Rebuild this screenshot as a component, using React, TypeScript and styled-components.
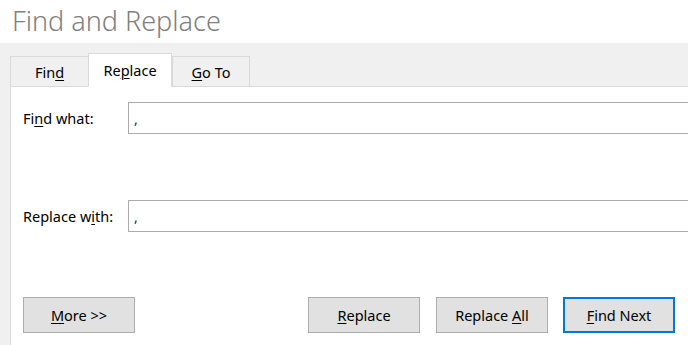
import React from "react";
import styled, { createGlobalStyle } from "styled-components";

const Global = createGlobalStyle`
  html, body { margin: 0; padding: 0; background: #f0f0f0; }
  body { font-family: "Noto Sans", "Open Sans", sans-serif; overflow: hidden; }
  #root { height: 345px; }
`;

const Window = styled.div`
  height: 345px;
  width: 688px;
  display: flex;
  flex-direction: column;
  overflow: hidden;
`;

const TitleBar = styled.div`
  height: 43px;
  background: #ffffff;
  padding-left: 12px;
  display: flex;
  align-items: center;
  box-sizing: border-box;
`;

const Title = styled.h1`
  margin: 0;
  font-family: "Noto Sans", "Open Sans", sans-serif;
  font-weight: 300;
  font-size: 27px;
  color: #808080;
  line-height: 1;
  transform: translateY(-1px);
`;

const Body = styled.div`
  flex: 1;
  display: flex;
  flex-direction: column;
  padding: 11px 0 0 10px;
  background: #f0f0f0;
  min-height: 0;
`;

const TabRow = styled.div`
  display: flex;
  align-items: flex-end;
  height: 33px;
  position: relative;
  z-index: 1;
  margin-bottom: -1px;
`;

const Tab = styled.div<{ $active?: boolean; $w: number }>`
  box-sizing: border-box;
  width: ${(p) => p.$w}px;
  height: ${(p) => (p.$active ? 34 : 31)}px;
  display: flex;
  align-items: center;
  justify-content: center;
  border: 1px solid #d9d9d9;
  border-bottom: ${(p) => (p.$active ? "1px solid #ffffff" : "1px solid #d9d9d9")};
  ${(p) => (p.$active ? "" : "border-right: none;")}
  background: ${(p) => (p.$active ? "#ffffff" : "#f0f0f0")};
  font-size: 14.5px;
  color: #000;
  padding-top: ${(p) => (p.$active ? 0 : 1)}px;
  &:last-child { border-right: 1px solid #d9d9d9; }
`;

const Panel = styled.div`
  flex: 1;
  background: #ffffff;
  border-top: 1px solid #d9d9d9;
  border-left: 1px solid #d9d9d9;
  display: flex;
  flex-direction: column;
  padding: 15px 0 0 12px;
  box-sizing: border-box;
`;

const FieldRow = styled.div<{ $mt?: number }>`
  display: flex;
  align-items: center;
  margin-top: ${(p) => p.$mt ?? 0}px;
`;

const Label = styled.label`
  width: 105px;
  font-size: 14.5px;
  color: #000;
  flex-shrink: 0;
`;

const Input = styled.div`
  flex: 1;
  height: 32px;
  box-sizing: border-box;
  border: 1px solid #ababab;
  border-right: none;
  display: flex;
  align-items: center;
  padding-left: 5px;
  font-size: 14px;
  color: #1a1a6e;
`;

const ButtonRow = styled.div`
  display: flex;
  align-items: center;
  margin-top: 65px;
`;

const Spacer = styled.div`
  flex: 1;
`;

const Button = styled.div<{ $primary?: boolean; $mr?: number }>`
  box-sizing: border-box;
  width: 112px;
  height: 36px;
  display: flex;
  align-items: center;
  justify-content: center;
  background: #e1e1e1;
  border: ${(p) => (p.$primary ? "2px solid #0078d7" : "1px solid #adadad")};
  font-size: 14.5px;
  color: #000;
  margin-right: ${(p) => p.$mr ?? 0}px;
`;

const U = styled.span`
  text-decoration: underline;
  text-underline-offset: 2px;
  text-decoration-thickness: 1px;
`;

export default function App() {
  return (
    <>
      <Global />
      <Window>
        <TitleBar>
          <Title>Find and Replace</Title>
        </TitleBar>
        <Body>
          <TabRow>
            <Tab $w={78}>Fin<U>d</U></Tab>
            <Tab $w={84} $active>Re<U>p</U>lace</Tab>
            <Tab $w={78}><U>G</U>o To</Tab>
          </TabRow>
          <Panel>
            <FieldRow>
              <Label>Fi<U>n</U>d what:</Label>
              <Input>,</Input>
            </FieldRow>
            <FieldRow $mt={66}>
              <Label>Replace w<U>i</U>th:</Label>
              <Input>,</Input>
            </FieldRow>
            <ButtonRow>
              <Button><span><U>M</U>ore &gt;&gt;</span></Button>
              <Spacer />
              <Button $mr={16}><span><U>R</U>eplace</span></Button>
              <Button $mr={15}><span>Replace <U>A</U>ll</span></Button>
              <Button $primary $mr={13}><span><U>F</U>ind Next</span></Button>
            </ButtonRow>
          </Panel>
        </Body>
      </Window>
    </>
  );
}
